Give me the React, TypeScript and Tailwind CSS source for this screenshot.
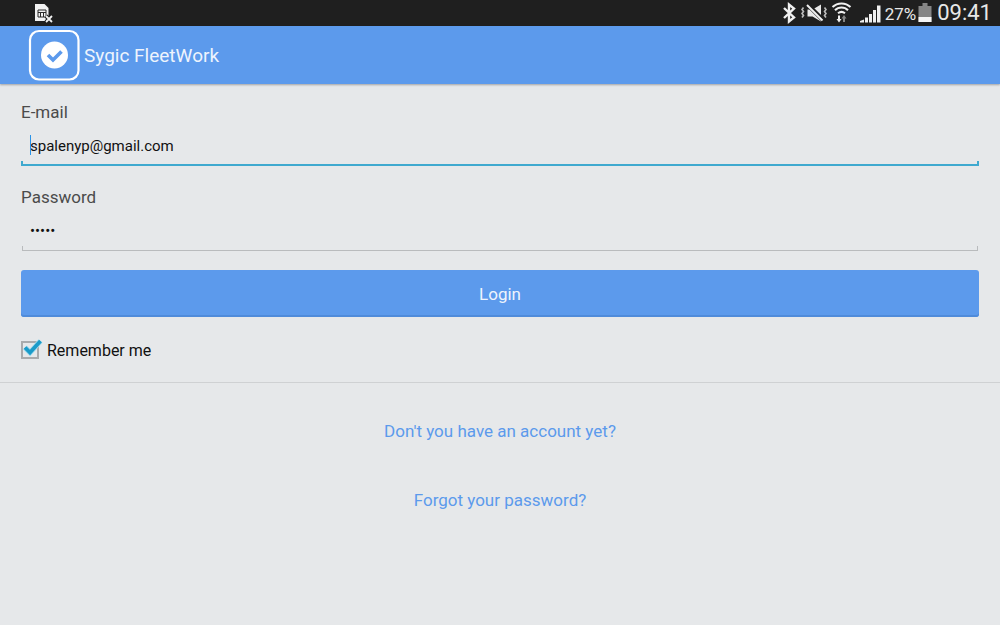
import { useState } from 'react';
import type { InputHTMLAttributes } from 'react';

interface FieldProps extends InputHTMLAttributes<HTMLInputElement> {
  id: string;
  label: string;
  active?: boolean;
}

function Field({ id, label, active, ...props }: FieldProps) {
  return (
    <div className="flex flex-col">
      <label htmlFor={id} className="self-start text-[17px] leading-6 text-[#4b4b4b]">
        {label}
      </label>
      <div className="relative mt-1.5">
        <input
          id={id}
          className="block w-full h-[31px] px-[9px] bg-transparent text-[15px] text-[#111111] outline-none"
          {...props}
        />
        {active && <span className="absolute left-[9px] top-[5px] w-px h-5 bg-[#2a93e8]" />}
      </div>
      {active ? (
        <div className="h-[5px] border-x-2 border-b-2 border-[#3fa9cf]" />
      ) : (
        <div className="h-[5px] border-x border-b border-[#b9bbbd] mx-px" />
      )}
    </div>
  );
}

function StatusBar() {
  return (
    <div className="flex items-center justify-between h-[26px] bg-[#1f1f1f] pl-[34px] pr-2 text-[#e8e8e8]">
      <svg width="20" height="20" viewBox="0 0 20 20" fill="none">
        <path d="M1 1h9.500l4 4v13H1z" fill="#f2f2f2" />
        <path d="M4 7h8v7H4zM4 9.500h8M6.500 9.500V14M9.500 9.500V14" stroke="#2a2a2a" />
        <path d="M12 13l6 6M18 13l-6 6" stroke="#1f1f1f" strokeWidth="4" />
        <path d="M12 13l6 6M18 13l-6 6" stroke="#f2f2f2" strokeWidth="1.800" />
      </svg>
      <div className="flex items-center">
        <svg width="105" height="26" viewBox="0 0 105 26" fill="none">
          {/* bluetooth */}
          <path d="M4 8l10 9.500-5 4V4.500l5 4L4 18" stroke="#f0f0f0" strokeWidth="2.400" />
          {/* muted speaker with vibration marks */}
          <path d="M27.500 9.500h5l8.500-5v17l-8.500-5h-5z" fill="#e8e8e8" />
          <path d="M27.500 4.500l16 16" stroke="#1f1f1f" strokeWidth="4.500" />
          <path d="M27 5l15.500 15.500" stroke="#f0f0f0" strokeWidth="2" />
          <path d="M23.500 7.500l-1.500 2 1.500 2-1.500 2 1.500 2-1.500 2M44.500 7.500l1.500 2-1.500 2 1.500 2-1.500 2 1.500 2" stroke="#bbbbbb" strokeWidth="1.600" />
          {/* wifi with traffic arrows */}
          <path d="M52.500 7a13 13 0 0 1 18 0M55 10.300a9 9 0 0 1 13 0M58 13.300a5.500 5.500 0 0 1 7 0" stroke="#f0f0f0" strokeWidth="2" />
          <path d="M58 15.500h2v3.500h1.500l-2.500 3.500-2.500-3.500H58z" fill="#f0f0f0" />
          <path d="M63 22v-3.500h-1.500l2.500-3.500 2.500 3.500H65V22z" fill="#858585" />
          {/* signal strength */}
          <path d="M80 22.500v-1.500l4-1.500v3zM85 22.500v-5h3v5zM89 22.500v-8.500h3v8.500zM93 22.500V10h3v12.500zM97 22.500V5.500h3.500v17z" fill="#f0f0f0" />
        </svg>
        <span className="text-[17px] leading-[26px] pt-0.5">27%</span>
        <svg width="14" height="20" viewBox="0 0 14 20" className="ml-0.5">
          <path d="M4.500 0h5v3h4v16h-13V3h4z" fill="#858585" />
          <path d="M0.500 14h13v5h-13z" fill="#f5f5f5" />
        </svg>
        <span className="ml-[5px] text-[22px] leading-[26px]">09:41</span>
      </div>
    </div>
  );
}

function Header() {
  return (
    <header className="relative flex items-center gap-1 h-[58px] bg-[#5c9aec] pl-7 text-white shadow-[0_1px_2px_rgba(0,0,0,0.3)]">
      <svg width="52" height="52" viewBox="0 0 52 52" fill="none">
        <rect x="2" y="2" width="48.500" height="48.500" rx="9" stroke="#ffffff" strokeWidth="2.200" />
        <circle cx="26.500" cy="26" r="13.500" fill="#ffffff" />
        <path d="M20 26l5 5 8.500-8.500" stroke="#5c9aec" strokeWidth="3.600" />
      </svg>
      <h1 className="text-[19px] leading-6 pt-0.5 text-[#eef4fd]">Sygic FleetWork</h1>
    </header>
  );
}

export default function App() {
  const [email, setEmail] = useState('spalenyp@gmail.com');
  const [password, setPassword] = useState('12345');
  const [remember, setRemember] = useState(true);

  return (
    <div className="min-h-screen bg-[#e6e8ea] font-[Roboto,sans-serif]">
      <StatusBar />
      <Header />

      <main>
        <form onSubmit={(e) => e.preventDefault()} className="flex flex-col gap-[19px] px-[21px] pt-4 pb-[19px]">
          <Field
            id="email"
            label="E-mail"
            type="text"
            value={email}
            onChange={(e) => setEmail(e.target.value)}
            active
          />
          <Field
            id="password"
            label="Password"
            type="password"
            value={password}
            onChange={(e) => setPassword(e.target.value)}
          />

          <button
            type="submit"
            className="h-[47px] rounded-[3px] bg-[#5c9aec] pt-0.5 shadow-[inset_0_-2px_0_#4f8bda] text-[17px] text-[#eef4fd]"
          >
            Login
          </button>

          <div className="flex items-center h-[26px] mt-px">
            <span className="relative flex items-center w-[26px] h-6">
              <input
                id="remember"
                type="checkbox"
                checked={remember}
                onChange={(e) => setRemember(e.target.checked)}
                className="appearance-none w-[18px] h-[18px] border-2 border-[#a9abad]"
              />
              {remember && (
                <svg
                  width="24"
                  height="20"
                  viewBox="0 0 24 20"
                  fill="none"
                  className="absolute left-0 top-0 pointer-events-none"
                >
                  <path d="M4 9.500l5 5L19.500 3" stroke="#a6dced" strokeWidth="5.500" />
                  <path d="M4 9.500l5 5L19.500 3" stroke="#1b9bc9" strokeWidth="3.800" />
                </svg>
              )}
            </span>
            <label htmlFor="remember" className="text-[16px] leading-6 pt-0.5 text-[#111111]">
              Remember me
            </label>
          </div>
        </form>

        <nav className="flex flex-col items-center gap-[45px] border-t border-[#cfd1d3] pt-9 pb-9 text-[17px] leading-6 text-[#5c9aec]">
          <a href="#register">Don't you have an account yet?</a>
          <a href="#forgot">Forgot your password?</a>
        </nav>
      </main>
    </div>
  );
}
